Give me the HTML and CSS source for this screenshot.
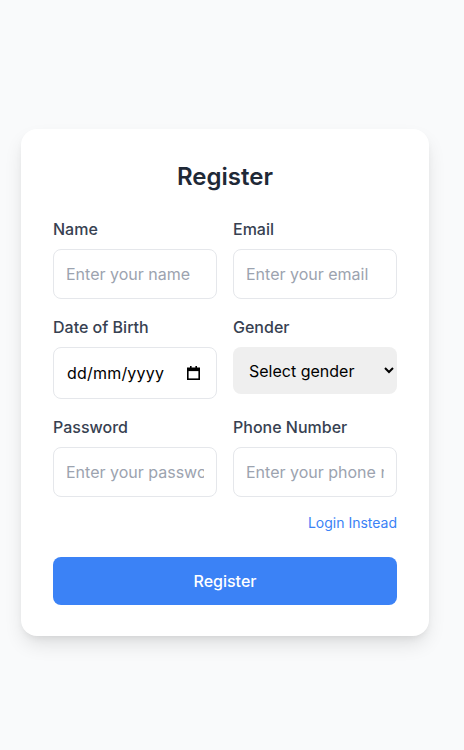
FILE: index.html
```html
<!DOCTYPE html>
<html>
<head>
<meta charset="utf-8">
<link rel="stylesheet" href="styles.css">
</head>
<body>
<div class="page">
  <form class="card">
    <h1 class="title">Register</h1>
    <div class="grid">
      <div class="field">
        <label class="label">Name</label>
        <input class="input" type="text" placeholder="Enter your name">
      </div>
      <div class="field">
        <label class="label">Email</label>
        <input class="input" type="email" placeholder="Enter your email">
      </div>
      <div class="field">
        <label class="label">Date of Birth</label>
        <div class="input date">
          <span class="date-text">dd/mm/yyyy</span>
          <svg class="cal" width="13" height="14" viewBox="0 0 13 14" aria-hidden="true">
            <rect x="3" y="0" width="1.6" height="3" fill="#000"/>
            <rect x="8.4" y="0" width="1.6" height="3" fill="#000"/>
            <rect x="0.8" y="2.3" width="11.4" height="10.9" fill="none" stroke="#000" stroke-width="1.6"/>
            <rect x="0.8" y="2.3" width="11.4" height="2.8" fill="#000"/>
          </svg>
        </div>
      </div>
      <div class="field">
        <label class="label">Gender</label>
        <select class="select">
          <option>Select gender</option>
          <option>Male</option>
          <option>Female</option>
        </select>
      </div>
      <div class="field">
        <label class="label">Password</label>
        <input class="input" type="password" placeholder="Enter your password">
      </div>
      <div class="field">
        <label class="label">Phone Number</label>
        <input class="input" type="tel" placeholder="Enter your phone number">
      </div>
    </div>
    <div class="links"><a class="link" href="#">Login Instead</a></div>
    <button class="btn" type="button">Register</button>
  </form>
</div>
</body>
</html>
```
FILE: styles.css
```css
* { box-sizing: border-box; }
html, body { margin: 0; padding: 0; }
body {
  background: #f9fafb;
  font-family: Inter, "Noto Sans", sans-serif;
  color: #374151;
  min-height: 750px;
}
.page {
  padding: 129px 0 0 21px;
  display: flex;
  justify-content: flex-start;
}
.card {
  width: 408px;
  background: #ffffff;
  border-radius: 16px;
  padding: 32px 32px 31px 32px;
  box-shadow: 0 10px 20px -3px rgba(0,0,0,0.12), 0 4px 8px -4px rgba(0,0,0,0.1);
}
.title {
  margin: 0 0 24px 0;
  text-align: center;
  font-size: 24px;
  line-height: 32px;
  font-weight: 600;
  color: #1f2937;
}
.grid {
  display: grid;
  grid-template-columns: 1fr 1fr;
  column-gap: 16px;
  row-gap: 16px;
}
.field {
  display: flex;
  flex-direction: column;
  align-items: stretch;
}
.label {
  font-size: 16px;
  line-height: 24px;
  font-weight: 500;
  color: #374151;
  margin-bottom: 8px;
}
.input {
  height: 50px;
  width: 100%;
  border: 1px solid #e5e7eb;
  border-radius: 8px;
  padding: 0 12px;
  font-family: Inter, "Noto Sans", sans-serif;
  font-size: 16px;
  color: #111827;
  background: #fff;
  outline: none;
}
.input::placeholder { color: #9ca3af; }
.date {
  height: 52px;
  display: flex;
  align-items: center;
  justify-content: space-between;
  padding: 0 16px 0 13px;
  color: #000;
}
.date-text {
  font-size: 16px;
  color: #000;
  letter-spacing: 0.2px;
}
.cal { display: block; margin-top: 0px; }
.select {
  height: 47px;
  width: 100%;
  border: none;
  border-radius: 8px;
  background-color: #efefef;
  padding: 0 12px;
  font-family: Inter, "Noto Sans", sans-serif;
  font-size: 16px;
  color: #000;
}
.links {
  display: flex;
  justify-content: flex-end;
  margin-top: 16px;
}
.link {
  font-size: 14px;
  line-height: 20px;
  color: #3b82f6;
  text-decoration: none;
}
.btn {
  display: block;
  width: 100%;
  height: 48px;
  margin-top: 24px;
  border: none;
  border-radius: 8px;
  background: #3b82f6;
  color: #fff;
  font-family: Inter, "Noto Sans", sans-serif;
  font-size: 16px;
  font-weight: 500;
}
```
